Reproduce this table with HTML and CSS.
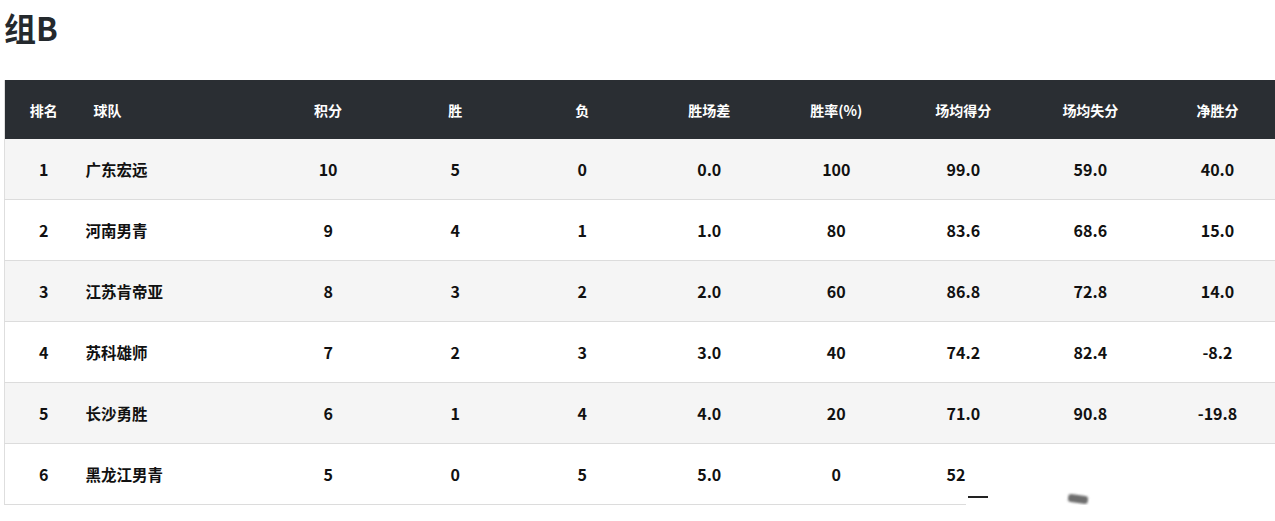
FILE: index.html
```html
<!DOCTYPE html>
<html lang="zh-CN">
<head>
<meta charset="utf-8">
<title>组B</title>
<link rel="stylesheet" href="styles.css">
</head>
<body>
<div class="page">
  <h2 class="group-title">组B</h2>
  <div class="table-wrap">
    <table class="standings">
      <colgroup>
        <col class="c-rank"><col class="c-team">
        <col class="c-num"><col class="c-num"><col class="c-num"><col class="c-num">
        <col class="c-num"><col class="c-num"><col class="c-num"><col class="c-num">
      </colgroup>
      <thead>
        <tr>
          <th>排名</th><th class="team">球队</th><th>积分</th><th>胜</th><th>负</th>
          <th>胜场差</th><th>胜率(%)</th><th>场均得分</th><th>场均失分</th><th>净胜分</th>
        </tr>
      </thead>
      <tbody>
        <tr><td>1</td><td class="team">广东宏远</td><td>10</td><td>5</td><td>0</td><td>0.0</td><td>100</td><td>99.0</td><td>59.0</td><td>40.0</td></tr>
        <tr><td>2</td><td class="team">河南男青</td><td>9</td><td>4</td><td>1</td><td>1.0</td><td>80</td><td>83.6</td><td>68.6</td><td>15.0</td></tr>
        <tr><td>3</td><td class="team">江苏肯帝亚</td><td>8</td><td>3</td><td>2</td><td>2.0</td><td>60</td><td>86.8</td><td>72.8</td><td>14.0</td></tr>
        <tr><td>4</td><td class="team">苏科雄师</td><td>7</td><td>2</td><td>3</td><td>3.0</td><td>40</td><td>74.2</td><td>82.4</td><td>-8.2</td></tr>
        <tr><td>5</td><td class="team">长沙勇胜</td><td>6</td><td>1</td><td>4</td><td>4.0</td><td>20</td><td>71.0</td><td>90.8</td><td>-19.8</td></tr>
        <tr><td>6</td><td class="team">黑龙江男青</td><td>5</td><td>0</td><td>5</td><td>5.0</td><td>0</td><td>52.0</td><td>71.0</td><td>-19.0</td></tr>
      </tbody>
    </table>
    <div class="cover">
      <span class="dash"></span>
      <span class="smudge"></span>
    </div>
  </div>
</div>
</body>
</html>
```
FILE: styles.css
```css
html, body {
  margin: 0;
  padding: 0;
  background: #ffffff;
  overflow: hidden;
}
body {
  font-family: "Noto Sans CJK SC", "Noto Sans", sans-serif;
  color: #111111;
}
.page {
  padding: 0 0 0 4px;
}
.group-title {
  margin: 0;
  padding-top: 4px;
  height: 76px;
  font-size: 32px;
  line-height: 46px;
  font-weight: 700;
  color: #24292d;
}
.table-wrap {
  position: relative;
  width: 1290px;
}
.standings {
  border-collapse: collapse;
  table-layout: fixed;
  width: 1277px;
  border-left: 1px solid #dedede;
}
.c-rank { width: 78px; }
.c-team { width: 182px; }
.c-num { width: 127px; }
.standings th {
  background: #2a2e33;
  color: #ffffff;
  font-size: 14px;
  font-weight: 700;
  height: 59px;
  padding: 0;
  text-align: center;
}
.standings th.team {
  text-align: left;
  padding-left: 11px;
}
.standings td {
  height: 60px;
  padding: 0;
  font-size: 16px;
  font-weight: 700;
  text-align: center;
  border-bottom: 1px solid #dcdcdc;
  color: #111111;
}
.standings td.team {
  text-align: left;
  padding-left: 3px;
  font-size: 15.5px;
}
.standings tbody tr:nth-child(odd) td {
  background: #f5f5f5;
}
.standings tbody tr:nth-child(even) td {
  background: #ffffff;
}
.cover {
  position: absolute;
  left: 962px;
  top: 372px;
  width: 330px;
  height: 80px;
  background: #ffffff;
}
.dash {
  position: absolute;
  left: 2px;
  top: 44px;
  width: 20px;
  height: 2px;
  background: #222222;
}
.smudge {
  position: absolute;
  left: 102px;
  top: 43px;
  width: 20px;
  height: 8px;
  background: #555555;
  border-radius: 3px;
  transform: rotate(8deg);
  filter: blur(1px);
  opacity: 0.85;
}
```
